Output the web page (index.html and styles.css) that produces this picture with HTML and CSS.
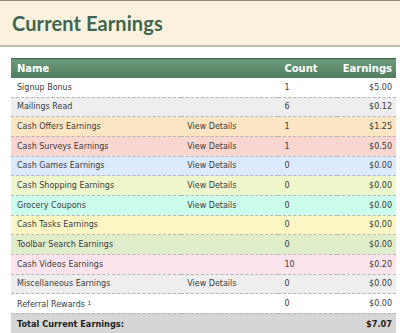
FILE: index.html
```html
<!DOCTYPE html>
<html>
<head>
<meta charset="utf-8">
<link rel="stylesheet" href="styles.css">
</head>
<body>
<div class="titlebar"><h1>Current Earnings</h1></div>
<table class="earn">
  <thead>
    <tr><th class="c-name">Name</th><th class="c-det"></th><th class="c-cnt">Count</th><th class="c-amt">Earnings</th></tr>
  </thead>
  <tbody>
    <tr class="r-white"><td>Signup Bonus</td><td></td><td>1</td><td class="amt">$5.00</td></tr>
    <tr class="r-grey"><td>Mailings Read</td><td></td><td>6</td><td class="amt">$0.12</td></tr>
    <tr class="r-orange"><td>Cash Offers Earnings</td><td>View Details</td><td>1</td><td class="amt">$1.25</td></tr>
    <tr class="r-red"><td>Cash Surveys Earnings</td><td>View Details</td><td>1</td><td class="amt">$0.50</td></tr>
    <tr class="r-blue"><td>Cash Games Earnings</td><td>View Details</td><td>0</td><td class="amt">$0.00</td></tr>
    <tr class="r-lime"><td>Cash Shopping Earnings</td><td>View Details</td><td>0</td><td class="amt">$0.00</td></tr>
    <tr class="r-mint"><td>Grocery Coupons</td><td>View Details</td><td>0</td><td class="amt">$0.00</td></tr>
    <tr class="r-yellow"><td>Cash Tasks Earnings</td><td></td><td>0</td><td class="amt">$0.00</td></tr>
    <tr class="r-green"><td>Toolbar Search Earnings</td><td></td><td>0</td><td class="amt">$0.00</td></tr>
    <tr class="r-pink"><td>Cash Videos Earnings</td><td></td><td>10</td><td class="amt">$0.20</td></tr>
    <tr class="r-grey"><td>Miscellaneous Earnings</td><td>View Details</td><td>0</td><td class="amt">$0.00</td></tr>
    <tr class="r-white"><td>Referral Rewards <sup>1</sup></td><td></td><td>0</td><td class="amt">$0.00</td></tr>
    <tr class="r-total"><td>Total Current Earnings:</td><td></td><td></td><td class="amt">$7.07</td></tr>
  </tbody>
</table>
</body>
</html>
```
FILE: styles.css
```css
html, body { margin: 0; padding: 0; background: #fff; }
body { font-family: "DejaVu Sans", Verdana, sans-serif; overflow: hidden; }
.titlebar {
  background: #faf2df;
  border-top: 1px solid #8a8a80;
  border-bottom: 2px solid #bdbdb5;
  height: 44px;
  box-sizing: content-box;
  padding-left: 12px;
  display: flex;
  align-items: center;
}
.titlebar h1 {
  margin: 0;
  font-family: Lato, sans-serif;
  font-weight: bold;
  font-size: 20px;
  color: #3f6650;
  letter-spacing: 0.1px;
}
.earn {
  margin: 11px 0 0 11px;
  width: 385px;
  border-collapse: collapse;
  font-size: 8px;
  color: #3a3a3a;
}
.earn th {
  background: linear-gradient(#6f9a7d, #4e7c5d);
  color: #fff;
  font-weight: bold;
  font-size: 10px;
  height: 19px;
  padding: 0 6px;
  text-align: left;
  border-top: 1px solid #466f52;
}
.earn th.c-amt { text-align: right; padding-right: 4px; }
.earn td {
  height: 18.67px;
  padding: 0 6px;
  border-bottom: 1px dashed #b5b5b5;
  white-space: nowrap;
}
.earn td.amt { text-align: right; padding-right: 4px; }
.c-name { width: 165px; }
.c-det { width: 90px; }
.c-cnt { width: 48px; }
.earn sup { font-size: 6px; vertical-align: 2px; }
.r-white td { background: #ffffff; }
.r-grey td { background: #eeeeee; }
.r-orange td { background: #fbe5c2; }
.r-red td { background: #fad6d0; }
.r-blue td { background: #dbeafc; }
.r-lime td { background: #eef7cc; }
.r-mint td { background: #cbfcec; }
.r-yellow td { background: #fbf7c5; }
.r-green td { background: #e0edca; }
.r-pink td { background: #fde4ec; }
.r-total td { background: #d6d6d6; font-weight: bold; font-size: 8.2px; color: #222; height: 20px; }
```
